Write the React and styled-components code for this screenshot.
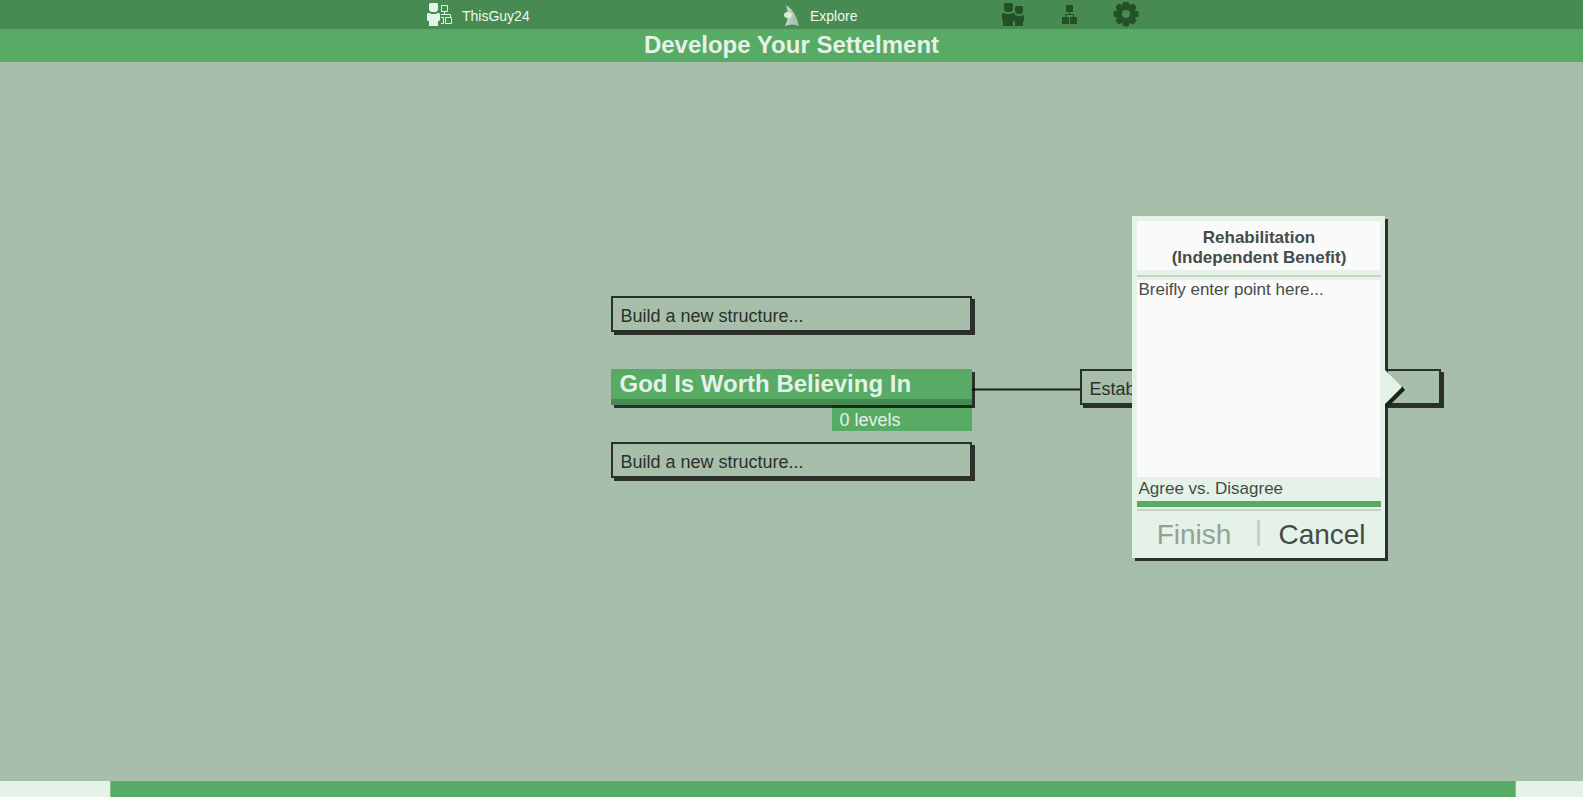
import React from "react";
import styled, { createGlobalStyle } from "styled-components";

const GlobalStyle = createGlobalStyle`
  * { box-sizing: border-box; }
  body {
    margin: 0;
    background: #a7beaa;
    font-family: "Liberation Sans", Arial, sans-serif;
  }
  button, textarea { font-family: inherit; }
`;

const Page = styled.div`
  display: flex;
  flex-direction: column;
  min-height: 100vh;
`;

const TopBar = styled.header`
  display: flex;
  justify-content: center;
  height: 29px;
  padding-top: 1px;
  background: #488b52;
`;

const Nav = styled.nav`
  display: grid;
  grid-template-columns: 357px 218px 154px;
`;

const NavLink = styled.a`
  display: flex;
  align-items: center;
  gap: 10px;
  line-height: 24px;
  font-size: 14px;
  color: #f0f8f1;
  text-decoration: none;
  svg { display: block; }
`;

const NavLabel = styled.span`
  padding-top: 2px;
`;

const IconRow = styled.div`
  display: flex;
  align-items: center;
  gap: 36px;
`;

const IconButton = styled.button`
  display: block;
  padding: 0;
  border: 0;
  background: none;
  color: #235127;
  cursor: pointer;
  svg { display: block; }
`;

const TitleBar = styled.div`
  display: flex;
  justify-content: center;
  height: 33px;
  background: #58ab65;
`;

const Title = styled.h1`
  margin: 0;
  font-size: 24px;
  line-height: 32px;
  color: #e4f2e7;
`;

const Canvas = styled.main`
  position: relative;
  flex: 1;
  min-height: 520px;
  overflow: hidden;
`;

/* Diagram origin: top-left corner of the central topic. */
const Origin = styled.div`
  position: absolute;
  left: calc(50% - 181px);
  top: 307px;
`;

const Place = styled.div`
  position: absolute;
  left: ${(p) => p.$x}px;
  top: ${(p) => p.$y}px;
`;

const Slot = styled.button`
  display: block;
  width: 361px;
  height: 36px;
  padding: 4px 8px 0;
  border: 2px solid #2b302b;
  background: #a7beaa;
  box-shadow: 3px 3px 0 #2b302b;
  font-size: 18px;
  text-align: left;
  color: #2b302b;
  cursor: pointer;
`;

const Topic = styled.h2`
  position: relative;
  width: 361px;
  height: 36px;
  margin: 0;
  padding-left: 9px;
  border-bottom: 6px solid #488b52;
  background: #58ab65;
  box-shadow: 3px 3px 0 rgba(0, 0, 0, 0.75);
  font-size: 24px;
  line-height: 30px;
  color: #e4f2e7;
`;

const Levels = styled.div`
  width: 140px;
  height: 26px;
  margin-left: auto;
  padding: 4px 0 0 8px;
  background: #58ab65;
  font-size: 18px;
  line-height: 22px;
  color: #e4f2e7;
`;

const Link = styled.div`
  width: 108px;
  height: 3px;
  border: solid rgba(0, 0, 0, 0.4);
  border-width: 1px 0;
  background: #151a15 content-box;
`;

const Card = styled.form`
  position: relative;
  display: flex;
  flex-direction: column;
  width: 253px;
  padding-top: 5px;
  background: #e4f2e7;
  box-shadow: 3px 3px 0 #2b302b;
  color: #464b47;
  font-size: 17px;
`;

const CardTitle = styled.h3`
  margin: 0 5px 5px;
  padding: 7px 0 2px 2px;
  background: #fafafa;
  font-size: 17px;
  line-height: 20px;
  text-align: center;
`;

const Rule = styled.hr`
  width: auto;
  height: 2px;
  margin: 0 4px 0 5px;
  border: 0;
  background: #c4d1c7;
`;

const PointInput = styled.textarea`
  display: block;
  height: 197px;
  margin: 3px 5px 0;
  padding: 0 2px;
  border: 0;
  outline: 0;
  resize: none;
  background: #fafafa;
  font-size: 17px;
  line-height: 20px;
  color: #464b47;
  &::placeholder { color: #464b47; opacity: 1; }
`;

const Stance = styled.div`
  padding-left: 7px;
  line-height: 24px;
`;

const StanceBar = styled.div`
  height: 6px;
  margin: 0 4px 2px 5px;
  background: #58ab65;
`;

const Actions = styled.div`
  display: flex;
  align-items: center;
  height: 47px;
  padding-bottom: 3px;
`;

const Action = styled.button`
  flex: 1;
  padding: 4px 0 0;
  border: 0;
  background: none;
  font-size: 28px;
  line-height: 32px;
  color: #464b47;
  cursor: pointer;
  &:disabled { color: #96a098; cursor: default; }
`;

const Separator = styled.div`
  width: 3px;
  height: 26px;
  background: #c4d1c7;
`;

const Pointer = styled.svg`
  position: absolute;
  left: 253px;
  top: 153px;
`;

const Progress = styled.footer`
  display: grid;
  grid-template-columns: 110px 1fr 67px;
  height: 16px;
  background: #e4f2e7;
`;

const ProgressFill = styled.div`
  grid-column: 2;
  border: solid #7fbf8a;
  border-width: 0 1px;
  background: #58ab65;
`;

const UserIcon = () => (
  <svg width="25" height="24" viewBox="0 0 25 24" aria-hidden="true">
    <g fill="#e4f2e7">
      <path d="M3 0h7l1 1v6L9 9H4L2 7V1z" />
      <path d="M1 10h2l1 1h5l1-1h2l1 1v6l-1 1h-1v5H2v-5H1L0 17v-6z" />
    </g>
    <path
      d="M14.5 2.5h6v6h-6zM17.5 9v3M14 11.5h9.5v3M18.5 14.5h6v6h-6zM14 14.5h2.500v6H14"
      fill="none"
      stroke="#e4f2e7"
    />
  </svg>
);

const ExploreIcon = () => (
  <svg width="16" height="24" viewBox="0 -2 16 24" aria-hidden="true">
    <defs>
      <linearGradient id="sail" x2="1">
        <stop offset="0" stopColor="#c4d8c8" />
        <stop offset="1" stopColor="#9dbba2" />
      </linearGradient>
    </defs>
    <path d="M2 0Q12 6 15 21Q8 18 1 21Q6 11 2 0z" fill="url(#sail)" />
    <ellipse cx="4" cy="10" rx="4" ry="3" fill="#dcebdf" />
  </svg>
);

const PeopleIcon = () => (
  <svg width="24" height="24" viewBox="0 0 24 24" fill="currentColor" aria-hidden="true">
    <path d="M3 0h7l1 1v6L9 9H4L2 7V1z" />
    <path d="M1 10h2l1 1h5l1-1h2l1 1v6l-1 1h-1v5H1v-5L0 17v-6z" />
    <path d="M14 3h6l1 1v5l-2 2h-4l-2-2V4z" />
    <path d="M13 12h1l1 1h4l1-1h1l1 1v5l-1 1v4h-8v-4l-1-1v-5z" />
  </svg>
);

const TreeIcon = () => (
  <svg width="15" height="20" viewBox="0 0 15 20" fill="currentColor" aria-hidden="true">
    <path d="M4 0h7v7H4zM0 12h7v7H0zM8 12h7v7H8zM7 7h1v2h4v3h-1v-2H4v2H3V9h4z" />
  </svg>
);

const GearIcon = () => (
  <svg width="26" height="26" viewBox="-13 -13 26 26" aria-hidden="true">
    <g fill="currentColor" transform="translate(0 -1)">
      {[0, 45, 90, 135].map((angle) => (
        <path
          key={angle}
          d="M-2.500-12.500h5l1.500 5h-8zM-2.500 12.500h5l1.500-5h-8z"
          transform={`rotate(${angle})`}
        />
      ))}
      <circle r="7" fill="none" stroke="currentColor" strokeWidth="6" />
    </g>
  </svg>
);

export default function App() {
  return (
    <Page>
      <GlobalStyle />
      <TopBar>
        <Nav>
          <NavLink href="#profile">
            <UserIcon />
            <NavLabel>ThisGuy24</NavLabel>
          </NavLink>
          <NavLink href="#explore">
            <ExploreIcon />
            <NavLabel>Explore</NavLabel>
          </NavLink>
          <IconRow>
            <IconButton aria-label="Community"><PeopleIcon /></IconButton>
            <IconButton aria-label="Structure"><TreeIcon /></IconButton>
            <IconButton aria-label="Settings"><GearIcon /></IconButton>
          </IconRow>
        </Nav>
      </TopBar>
      <TitleBar>
        <Title>Develope Your Settelment</Title>
      </TitleBar>
      <Canvas>
        <Origin>
          <Place $x={361} $y={19}><Link /></Place>
          <Place $x={0} $y={-73}><Slot>Build a new structure...</Slot></Place>
          <Place $x={0} $y={0}>
            <Topic>God Is Worth Believing In</Topic>
            <Levels>0 levels</Levels>
          </Place>
          <Place $x={0} $y={73}><Slot>Build a new structure...</Slot></Place>
          <Place $x={469} $y={0}><Slot>Establish</Slot></Place>
          <Place $x={521} $y={-153}>
            <Card onSubmit={(e) => e.preventDefault()}>
              <CardTitle>
                Rehabilitation
                <br />
                (Independent Benefit)
              </CardTitle>
              <Rule />
              <PointInput aria-label="Point" placeholder="Breifly enter point here..." />
              <Stance>Agree vs. Disagree</Stance>
              <StanceBar />
              <Rule />
              <Actions>
                <Action type="submit" disabled>Finish</Action>
                <Separator />
                <Action type="button">Cancel</Action>
              </Actions>
              <Pointer width="21" height="40" viewBox="0 0 21 40" aria-hidden="true">
                <path d="M0 35L17 17L20 21L3 38H0z" fill="#1d211d" />
                <path d="M0 1L17 18L0 35z" fill="#e4f2e7" />
              </Pointer>
            </Card>
          </Place>
        </Origin>
      </Canvas>
      <Progress>
        <ProgressFill />
      </Progress>
    </Page>
  );
}
